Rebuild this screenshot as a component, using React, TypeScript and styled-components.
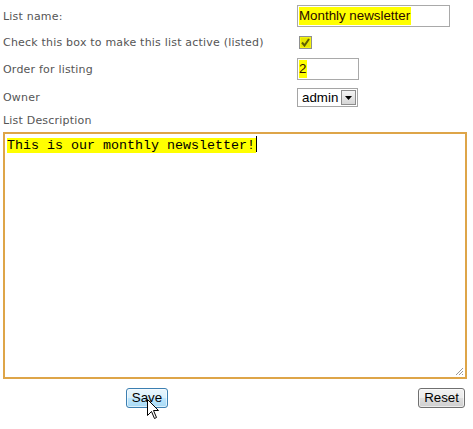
import React from "react";
import styled, { createGlobalStyle } from "styled-components";

const Global = createGlobalStyle`
  html, body { margin: 0; padding: 0; background: #fff; }
  body { font-family: "DejaVu Sans", Verdana, sans-serif; }
`;

const Page = styled.div`
  position: relative;
  width: 473px;
  height: 429px;
  padding: 2px 0 0 3px;
  box-sizing: border-box;
`;

const Row = styled.div<{ $h: number }>`
  display: grid;
  grid-template-columns: 294px auto;
  align-items: center;
  height: ${(p) => p.$h}px;
`;

const Label = styled.span`
  font-size: 11px;
  letter-spacing: 0.2px;
  color: #555;
  white-space: nowrap;
`;

const Field = styled.div<{ $w: number }>`
  width: ${(p) => p.$w}px;
  height: 22px;
  box-sizing: border-box;
  border: 1px solid #a9a9a9;
  background: #fff;
  display: flex;
  align-items: center;
  padding-left: 1px;
  font-family: "Liberation Sans", Arial, sans-serif;
  font-size: 13.33px;
  color: #2a0a00;
`;

const Hl = styled.span`
  background: #ffff00;
  line-height: 18px;
  padding-right: 1px;
`;

const Check = styled.span`
  margin-left: 2px;
  width: 13px;
  height: 13px;
  box-sizing: border-box;
  border: 1px solid #8e8f8f;
  background: #e6e600;
  display: flex;
  align-items: center;
  justify-content: center;
  box-shadow: inset 0 0 0 1px #f4f410;
`;

const Select = styled.div`
  width: 61px;
  height: 19px;
  box-sizing: border-box;
  border: 1px solid #a5a5a5;
  display: flex;
  align-items: stretch;
  font-family: "Liberation Sans", Arial, sans-serif;
  font-size: 13.33px;
  color: #000;
`;

const SelText = styled.span`
  flex: 1;
  display: flex;
  align-items: center;
  padding-left: 4px;
`;

const SelBtn = styled.span`
  width: 15px;
  margin: 1px;
  box-sizing: border-box;
  border: 1px solid #8c8c8c;
  background: linear-gradient(#f4f4f4, #d6d6d6);
  display: flex;
  align-items: center;
  justify-content: center;
`;

const TextBox = styled.div`
  margin-top: 4px;
  position: relative;
  width: 464px;
  height: 247px;
  box-sizing: border-box;
  border: 2px solid #dea548;
  padding: 2px 2px;
  font-family: "Liberation Mono", "Courier New", monospace;
  font-size: 13.33px;
  color: #000;
`;

const Caret = styled.span`
  display: inline-block;
  width: 1px;
  height: 16px;
  background: #000;
  vertical-align: -3px;
`;

const Grip = styled.svg`
  position: absolute;
  right: 1px;
  bottom: 1px;
`;

const ButtonRow = styled.div`
  display: grid;
  grid-template-columns: 294px 168px;
  align-items: center;
  margin-top: 8px;
`;

const Btn = styled.button<{ $blue?: boolean }>`
  height: 20px;
  box-sizing: border-box;
  padding: 0 5px;
  border: 1px solid ${(p) => (p.$blue ? "#3c7fb1" : "#707070")};
  border-radius: 3px;
  background: ${(p) =>
    p.$blue
      ? "linear-gradient(#eaf6fd 0%, #d9f0fc 50%, #bee6fd 51%, #a7d9f5 100%)"
      : "linear-gradient(#f2f2f2 0%, #ebebeb 50%, #dddddd 51%, #cfcfcf 100%)"};
  font-family: "Liberation Sans", Arial, sans-serif;
  font-size: 13.33px;
  color: #000;
  line-height: 16px;
  box-shadow: inset 0 0 0 1px rgba(255, 255, 255, 0.6);
`;

const SaveCell = styled.div`
  display: flex;
  justify-content: center;
  padding-right: 6px;
`;

const ResetCell = styled.div`
  display: flex;
  justify-content: flex-end;
  padding-top: 1px;
`;

const Cursor = styled.svg`
  position: absolute;
  left: 147px;
  top: 399px;
`;

export default function App() {
  return (
    <>
      <Global />
      <Page>
        <Row $h={28}>
          <Label>List name:</Label>
          <Field $w={153}>
            <Hl>Monthly newsletter</Hl>
          </Field>
        </Row>
        <Row $h={25}>
          <Label>Check this box to make this list active (listed)</Label>
          <Check>
            <svg width="9" height="9" viewBox="0 0 9 9">
              <path d="M1 4.5 L3.5 7.5 L8 1" fill="none" stroke="#5e5e00" strokeWidth="2" />
            </svg>
          </Check>
        </Row>
        <Row $h={28}>
          <Label>Order for listing</Label>
          <Field $w={62}>
            <Hl>2</Hl>
          </Field>
        </Row>
        <Row $h={29}>
          <Label>Owner</Label>
          <Select>
            <SelText>admin</SelText>
            <SelBtn>
              <svg width="7" height="4" viewBox="0 0 7 4">
                <path d="M0 0 H7 L3.5 4 Z" fill="#000" />
              </svg>
            </SelBtn>
          </Select>
        </Row>
        <Row $h={16}>
          <Label>List Description</Label>
        </Row>
        <TextBox>
          <Hl>This is our monthly newsletter!</Hl>
          <Caret />
          <Grip width="10" height="10" viewBox="0 0 10 10">
            <path d="M9 2 L2 9 M9 5 L5 9 M9 8 L8 9" stroke="#999" strokeWidth="1" />
          </Grip>
        </TextBox>
        <ButtonRow>
          <SaveCell>
            <Btn $blue>Save</Btn>
          </SaveCell>
          <ResetCell>
            <Btn>Reset</Btn>
          </ResetCell>
        </ButtonRow>
        <Cursor width="13" height="21" viewBox="0 0 13 21">
          <path
            d="M0.5 0.5 L0.5 16.5 L4.5 12.5 L7.5 19.5 L9.5 18.5 L6.5 11.5 L11.5 11.5 Z"
            fill="#fff"
            stroke="#000"
            strokeWidth="1"
          />
        </Cursor>
      </Page>
    </>
  );
}
